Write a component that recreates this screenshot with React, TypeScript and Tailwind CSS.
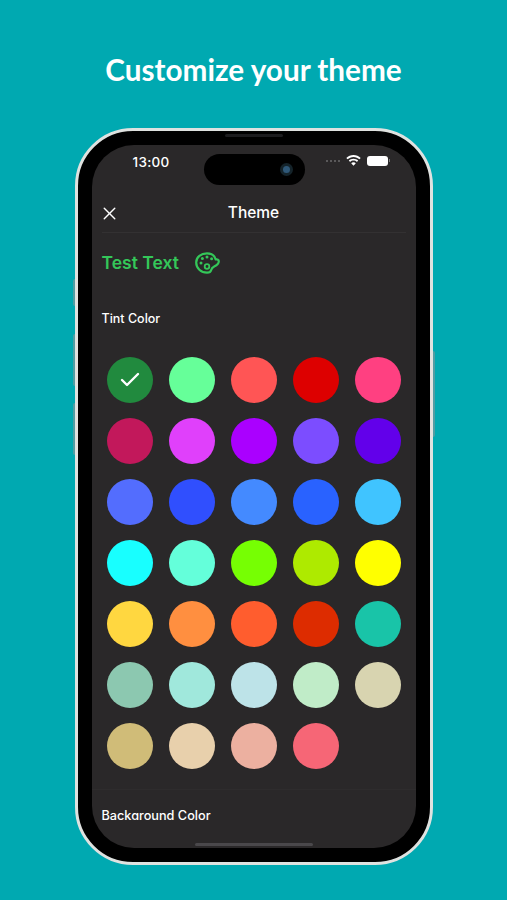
import { Check, X } from "lucide-react";

const rows = [
  ["#218a3e", "#66ff99", "#ff5555", "#dd0000", "#ff4081"],
  ["#c2185b", "#e040fb", "#aa00ff", "#7c4dff", "#6200ea"],
  ["#536dfe", "#304ffe", "#448aff", "#2962ff", "#40c4ff"],
  ["#18ffff", "#64ffda", "#76ff03", "#aeea00", "#ffff00"],
  ["#ffd740", "#ff8f40", "#ff5d2e", "#dd2c00", "#19c4a8"],
  ["#8cc8b0", "#a0e8dc", "#bde3e8", "#c0ecc8", "#d8d4b0"],
  ["#d0bc78", "#e8d0ac", "#ecb0a0", "#f66676"],
];

const PaletteIcon = () => (
  <svg width="25" height="22" viewBox="0 0 25 22" fill="none" stroke="#34c759" strokeWidth="2.200" strokeLinejoin="round">
    <path d="M12 1.300C6 1.300 1.200 5 1.200 10.500c0 5.600 4.800 10.200 10.800 10.200 2.400 0 3.800-1 4.200-2.700.4-1.700 1.300-2.700 3-3.500 2.500-1.100 4.600-3.100 4.600-5.200 0-1.500-1.300-2.200-3.100-1.800C19.700 3.500 16.500 1.300 12 1.300Z" />
    <circle cx="12" cy="14.500" r="2.300" strokeWidth="1.800" />
    <circle cx="6" cy="11" r="1.500" fill="#34c759" stroke="none" />
    <circle cx="7.400" cy="6.600" r="1.500" fill="#34c759" stroke="none" />
    <circle cx="12" cy="5" r="1.500" fill="#34c759" stroke="none" />
    <circle cx="16.600" cy="6.800" r="1.500" fill="#34c759" stroke="none" />
  </svg>
);

const Wifi = () => (
  <svg width="15" height="11" viewBox="0 0 15 11" fill="white">
    <path d="M7.500 0C4.700 0 2.200 1.100.3 2.900l1.300 1.400C3.100 2.800 5.200 1.900 7.500 1.900s4.400.9 5.900 2.400l1.300-1.400C12.800 1.100 10.300 0 7.500 0Z" />
    <path d="M7.500 3.700c-1.800 0-3.500.7-4.700 1.900l1.300 1.400c.9-.9 2.100-1.400 3.400-1.400s2.500.5 3.400 1.400l1.300-1.400c-1.200-1.200-2.900-1.900-4.700-1.900Z" />
    <path d="M7.500 7.300c-.9 0-1.700.3-2.300.9l2.300 2.600 2.300-2.600c-.6-.6-1.400-.9-2.300-.9Z" />
  </svg>
);

export default function App() {
  return (
    <div className="relative flex flex-col items-center h-[900px] overflow-hidden bg-[#00a9b1] font-['Inter',sans-serif]">
      <h1 className="mt-[50px] h-[40px] font-['Lato',sans-serif] text-[29.700px] font-bold leading-[40px] text-white">
        Customize your theme
      </h1>

      <div className="relative mt-[38px] h-[737px] w-[358px] rounded-[58px] border-[3px] border-[#dfe2e0] bg-black p-[14px]">
        {/* side buttons */}
        <div className="absolute -left-[5px] top-[148px] h-[27px] w-[2px] rounded-l-sm bg-[#4f9da3]" />
        <div className="absolute -left-[5px] top-[203px] h-[52px] w-[2px] rounded-l-sm bg-[#4f9da3]" />
        <div className="absolute -left-[5px] top-[272px] h-[52px] w-[2px] rounded-l-sm bg-[#4f9da3]" />
        <div className="absolute -right-[5px] top-[220px] h-[86px] w-[2px] rounded-r-sm bg-[#4f9da3]" />
        <div className="absolute left-1/2 top-[3px] h-[3px] w-[58px] -translate-x-1/2 rounded-full bg-[#1c1c1e]" />

        <div className="relative flex h-full flex-col overflow-hidden rounded-[42px] bg-[#2a2829] text-white">
          {/* dynamic island */}
          <div className="absolute left-[112px] top-[9px] flex h-[31px] w-[101px] items-center justify-end rounded-full bg-black pr-[12px]">
            <div className="h-[13px] w-[13px] rounded-full border-[3px] border-[#14232a] bg-[#2f5878]" />
          </div>

          <div className="flex h-[35px] items-start justify-between pl-[41px] pr-[26px] pt-[7px]">
            <span className="text-[13.500px] font-medium leading-[20px] tracking-[0.3px]">13:00</span>
            <div className="mt-[3px] flex items-center gap-[6px]">
              <div className="flex gap-[2px]">
                <i className="h-[2px] w-[2px] rounded-full bg-[#6b6a6b]" />
                <i className="h-[2px] w-[2px] rounded-full bg-[#6b6a6b]" />
                <i className="h-[2px] w-[2px] rounded-full bg-[#6b6a6b]" />
                <i className="h-[2px] w-[2px] rounded-full bg-[#6b6a6b]" />
              </div>
              <Wifi />
              <div className="flex items-center gap-[1px]">
                <div className="h-[10px] w-[21px] rounded-[3px] bg-white" />
                <div className="h-[3px] w-[1px] bg-[#777]" />
              </div>
            </div>
          </div>

          <div className="mx-[10px] flex h-[53px] items-center justify-center border-b border-[#333132] pt-[13px]">
            <X className="absolute left-[7px] mt-[1px] text-white" size={21} strokeWidth={1.6} />
            <span className="text-[15.500px] font-medium">Theme</span>
          </div>

          <div className="mt-[16px] flex items-center gap-[16px] pl-[10px]">
            <span className="text-[17.500px] font-semibold leading-[27px] text-[#34c759]">Test Text</span>
            <PaletteIcon />
          </div>

          <div className="mt-[34px] pl-[10px] text-[12.500px] font-medium leading-[18px]">Tint Color</div>

          <div className="mt-[29px] flex flex-col gap-[15px] pl-[15px]">
            {rows.map((row, i) => (
              <div key={i} className="flex gap-[16px]">
                {row.map((color) => (
                  <div
                    key={color}
                    className="flex h-[46px] w-[46px] items-center justify-center rounded-full"
                    style={{ backgroundColor: color }}
                  >
                    {color === "#218a3e" && <Check className="text-white" size={24} strokeWidth={2.4} />}
                  </div>
                ))}
              </div>
            ))}
          </div>

          <div className="mt-[20px] h-[31px] overflow-hidden border-t border-[#2e2c2d] pl-[10px] pt-[17px] text-[12.700px] font-medium leading-[18px]">
            Background Color
          </div>

          <div className="absolute bottom-[2px] left-[103px] h-[3px] w-[118px] rounded-full bg-[#4a484b]" />
        </div>
      </div>
    </div>
  );
}
